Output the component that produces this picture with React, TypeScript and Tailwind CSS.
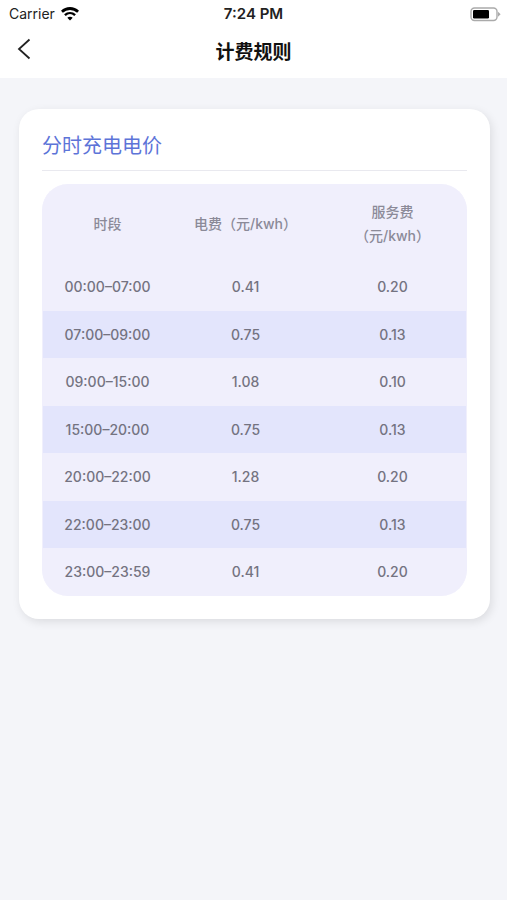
const rates = [
  { period: "00:00–07:00", power: "0.41", service: "0.20" },
  { period: "07:00–09:00", power: "0.75", service: "0.13" },
  { period: "09:00–15:00", power: "1.08", service: "0.10" },
  { period: "15:00–20:00", power: "0.75", service: "0.13" },
  { period: "20:00–22:00", power: "1.28", service: "0.20" },
  { period: "22:00–23:00", power: "0.75", service: "0.13" },
  { period: "23:00–23:59", power: "0.41", service: "0.20" },
];

function WifiIcon() {
  return (
    <svg className="h-[14px] w-[18px]" viewBox="0 0 18 14" fill="none" stroke="#000" aria-hidden="true">
      <path d="M0.9 4.7C5.5 0.4 12.5 0.4 17.1 4.7" strokeWidth="2.8" />
      <path d="M3.9 8.2C6.9 5.4 11.1 5.4 14.1 8.2" strokeWidth="2.4" />
      <path d="M9 13.4L6.3 10.7C7.8 9.4 10.2 9.4 11.7 10.7Z" fill="#000" stroke="none" />
    </svg>
  );
}

function BatteryIcon() {
  return (
    <svg className="h-[15px] w-[31px]" viewBox="0 0 31 15" aria-hidden="true">
      <rect x="1" y="1" width="26" height="12.5" rx="3.5" fill="#fff" stroke="#aaa" strokeWidth="1.4" />
      <rect x="3" y="3" width="16" height="8.5" rx="1.2" fill="#000" />
      <path d="M28 4.8L30.6 7.3L28 9.8Z" fill="#aaa" />
    </svg>
  );
}

function StatusBar() {
  return (
    <div className="grid h-7 grid-cols-3 items-center px-[6px] leading-5 text-[#222]">
      <div className="flex items-center gap-[6px] pl-[3px] text-[14px]">
        <span>Carrier</span>
        <WifiIcon />
      </div>
      <div className="text-center text-[15px] font-semibold">7:24 PM</div>
      <div className="flex justify-end">
        <BatteryIcon />
      </div>
    </div>
  );
}

export default function App() {
  return (
    <div className="min-h-screen bg-[#f4f5f9] font-['Inter','Noto_Sans_CJK_SC',sans-serif]">
      <header className="bg-white">
        <StatusBar />
        <div className="grid h-[50px] grid-cols-[48px_1fr_48px] items-start">
          <button type="button" aria-label="返回" className="flex h-[42px] items-center pl-[17px]">
            <svg className="h-[22px] w-[14px]" viewBox="0 0 14 22" fill="none" stroke="#222" strokeWidth="1.8" aria-hidden="true">
              <path d="M12.5 1.5L2 11L12.5 20.5" />
            </svg>
          </button>
          <h1 className="pt-[11px] text-center text-[19px] leading-7 font-bold text-[#111]">计费规则</h1>
        </div>
      </header>

      <main className="pt-[31px] pr-[17px] pl-[19px]">
        <section className="rounded-[20px] bg-white px-[23px] pt-3 pb-[23px] shadow-[2px_3px_10px_rgba(0,0,0,0.10)]">
          <h2 className="border-b border-[#e9e9ef] pt-[9px] pb-2 text-[20px] leading-8 text-[#5d74d8]">
            分时充电电价
          </h2>
          <div className="mt-[13px] overflow-hidden rounded-[26px] border-x border-[#f0effc] bg-[#f0effc]">
            <table className="w-full table-fixed text-center text-[14px] leading-6 font-medium">
              <thead>
                <tr className="h-[79px] text-[#8b8a98]">
                  <th scope="col" className="w-[129px] font-medium">时段</th>
                  <th scope="col" className="font-medium">电费（元/kwh）</th>
                  <th scope="col" className="font-medium">
                    服务费
                    <br />
                    （元/kwh）
                  </th>
                </tr>
              </thead>
              <tbody className="text-[#747381]">
                {rates.map((rate) => (
                  <tr key={rate.period} className="h-12 even:h-[47px] even:bg-[#e3e5fc]">
                    <td>{rate.period}</td>
                    <td>{rate.power}</td>
                    <td>{rate.service}</td>
                  </tr>
                ))}
              </tbody>
            </table>
          </div>
        </section>
      </main>
    </div>
  );
}
